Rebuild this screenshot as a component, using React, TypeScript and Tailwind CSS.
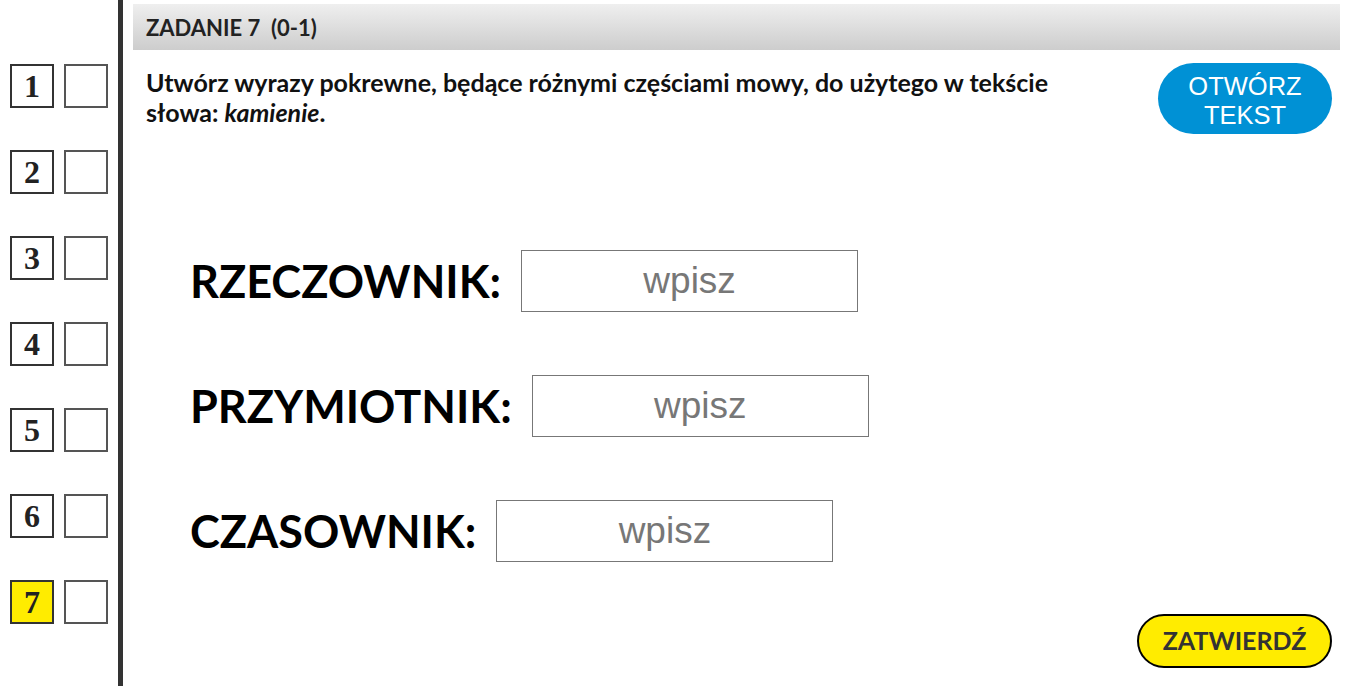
import React, { useState } from 'react';

const lato = { fontFamily: 'Lato, "Noto Sans", sans-serif' };

const NavRow = ({ n, active }: { n: number; active?: boolean }) => (
  <div className="flex items-center gap-[10px]">
    <div
      className={`flex h-[44px] w-[44px] items-center justify-center border-2 border-[#333] text-[32px] font-bold leading-none text-[#222] ${
        active ? 'bg-[#ffec00]' : 'bg-white'
      }`}
      style={{ fontFamily: '"Liberation Serif", "DejaVu Serif", serif' }}
    >
      {n}
    </div>
    <div className="h-[44px] w-[44px] border-2 border-[#555] bg-white" />
  </div>
);

const Field = ({ label, value, onChange }: { label: string; value: string; onChange: (v: string) => void }) => (
  <div className="flex items-center gap-[20px]">
    <span className="text-[45px] font-bold leading-none text-black" style={lato}>
      {label}
    </span>
    <input
      value={value}
      onChange={(e) => onChange(e.target.value)}
      placeholder="wpisz"
      className="h-[62px] w-[337px] border border-[#777] bg-white text-center text-[37px] text-[#333] outline-none placeholder:text-[#777]"
      style={{ fontFamily: '"Liberation Sans", Arial, sans-serif' }}
    />
  </div>
);

export default function App() {
  const [answers, setAnswers] = useState({ noun: '', adj: '', verb: '' });

  return (
    <div className="flex h-[686px] w-full overflow-hidden bg-white">
      <aside className="flex w-[118px] flex-col gap-[42px] pl-[10px] pt-[64px]">
        {[1, 2, 3, 4, 5, 6, 7].map((n) => (
          <NavRow key={n} n={n} active={n === 7} />
        ))}
      </aside>
      <div className="h-full w-[5px] bg-[#333]" />

      <main className="flex flex-1 flex-col pl-[10px] pr-[8px] pt-[4px]">
        <div
          className="flex h-[46px] items-center bg-gradient-to-b from-[#efefef] to-[#cdcdcd] pl-[13px] text-[22px] font-bold text-[#222]"
          style={lato}
        >
          ZADANIE 7&nbsp;&nbsp;(0-1)
        </div>

        <div className="mt-[13px] flex items-start justify-between pr-[8px]">
          <p className="mt-[4px] w-[960px] pl-[13px] text-[25px] font-bold leading-[30px] text-[#111]" style={lato}>
            Utwórz wyrazy pokrewne, będące różnymi częściami mowy, do użytego w tekście słowa:{' '}
            <em className="italic">kamienie</em>.
          </p>
          <button
            className="flex h-[71px] w-[174px] flex-col items-center justify-center rounded-full bg-[#0091d5] pt-[4px] text-[25.5px] leading-[29px] text-white"
            style={{ fontFamily: '"Liberation Sans", Arial, sans-serif' }}
          >
            <span>OTWÓRZ</span>
            <span>TEKST</span>
          </button>
        </div>

        <div className="mt-[116px] flex flex-col gap-[63px] pl-[57px]">
          <Field label="RZECZOWNIK:" value={answers.noun} onChange={(v) => setAnswers({ ...answers, noun: v })} />
          <Field label="PRZYMIOTNIK:" value={answers.adj} onChange={(v) => setAnswers({ ...answers, adj: v })} />
          <Field label="CZASOWNIK:" value={answers.verb} onChange={(v) => setAnswers({ ...answers, verb: v })} />
        </div>

        <div className="mt-[52px] flex justify-end pr-[8px]">
          <button
            className="h-[54px] w-[195px] rounded-full border-2 border-black bg-[#ffec00] text-[25px] font-bold text-[#333]"
            style={lato}
          >
            ZATWIERDŹ
          </button>
        </div>
      </main>
    </div>
  );
}
